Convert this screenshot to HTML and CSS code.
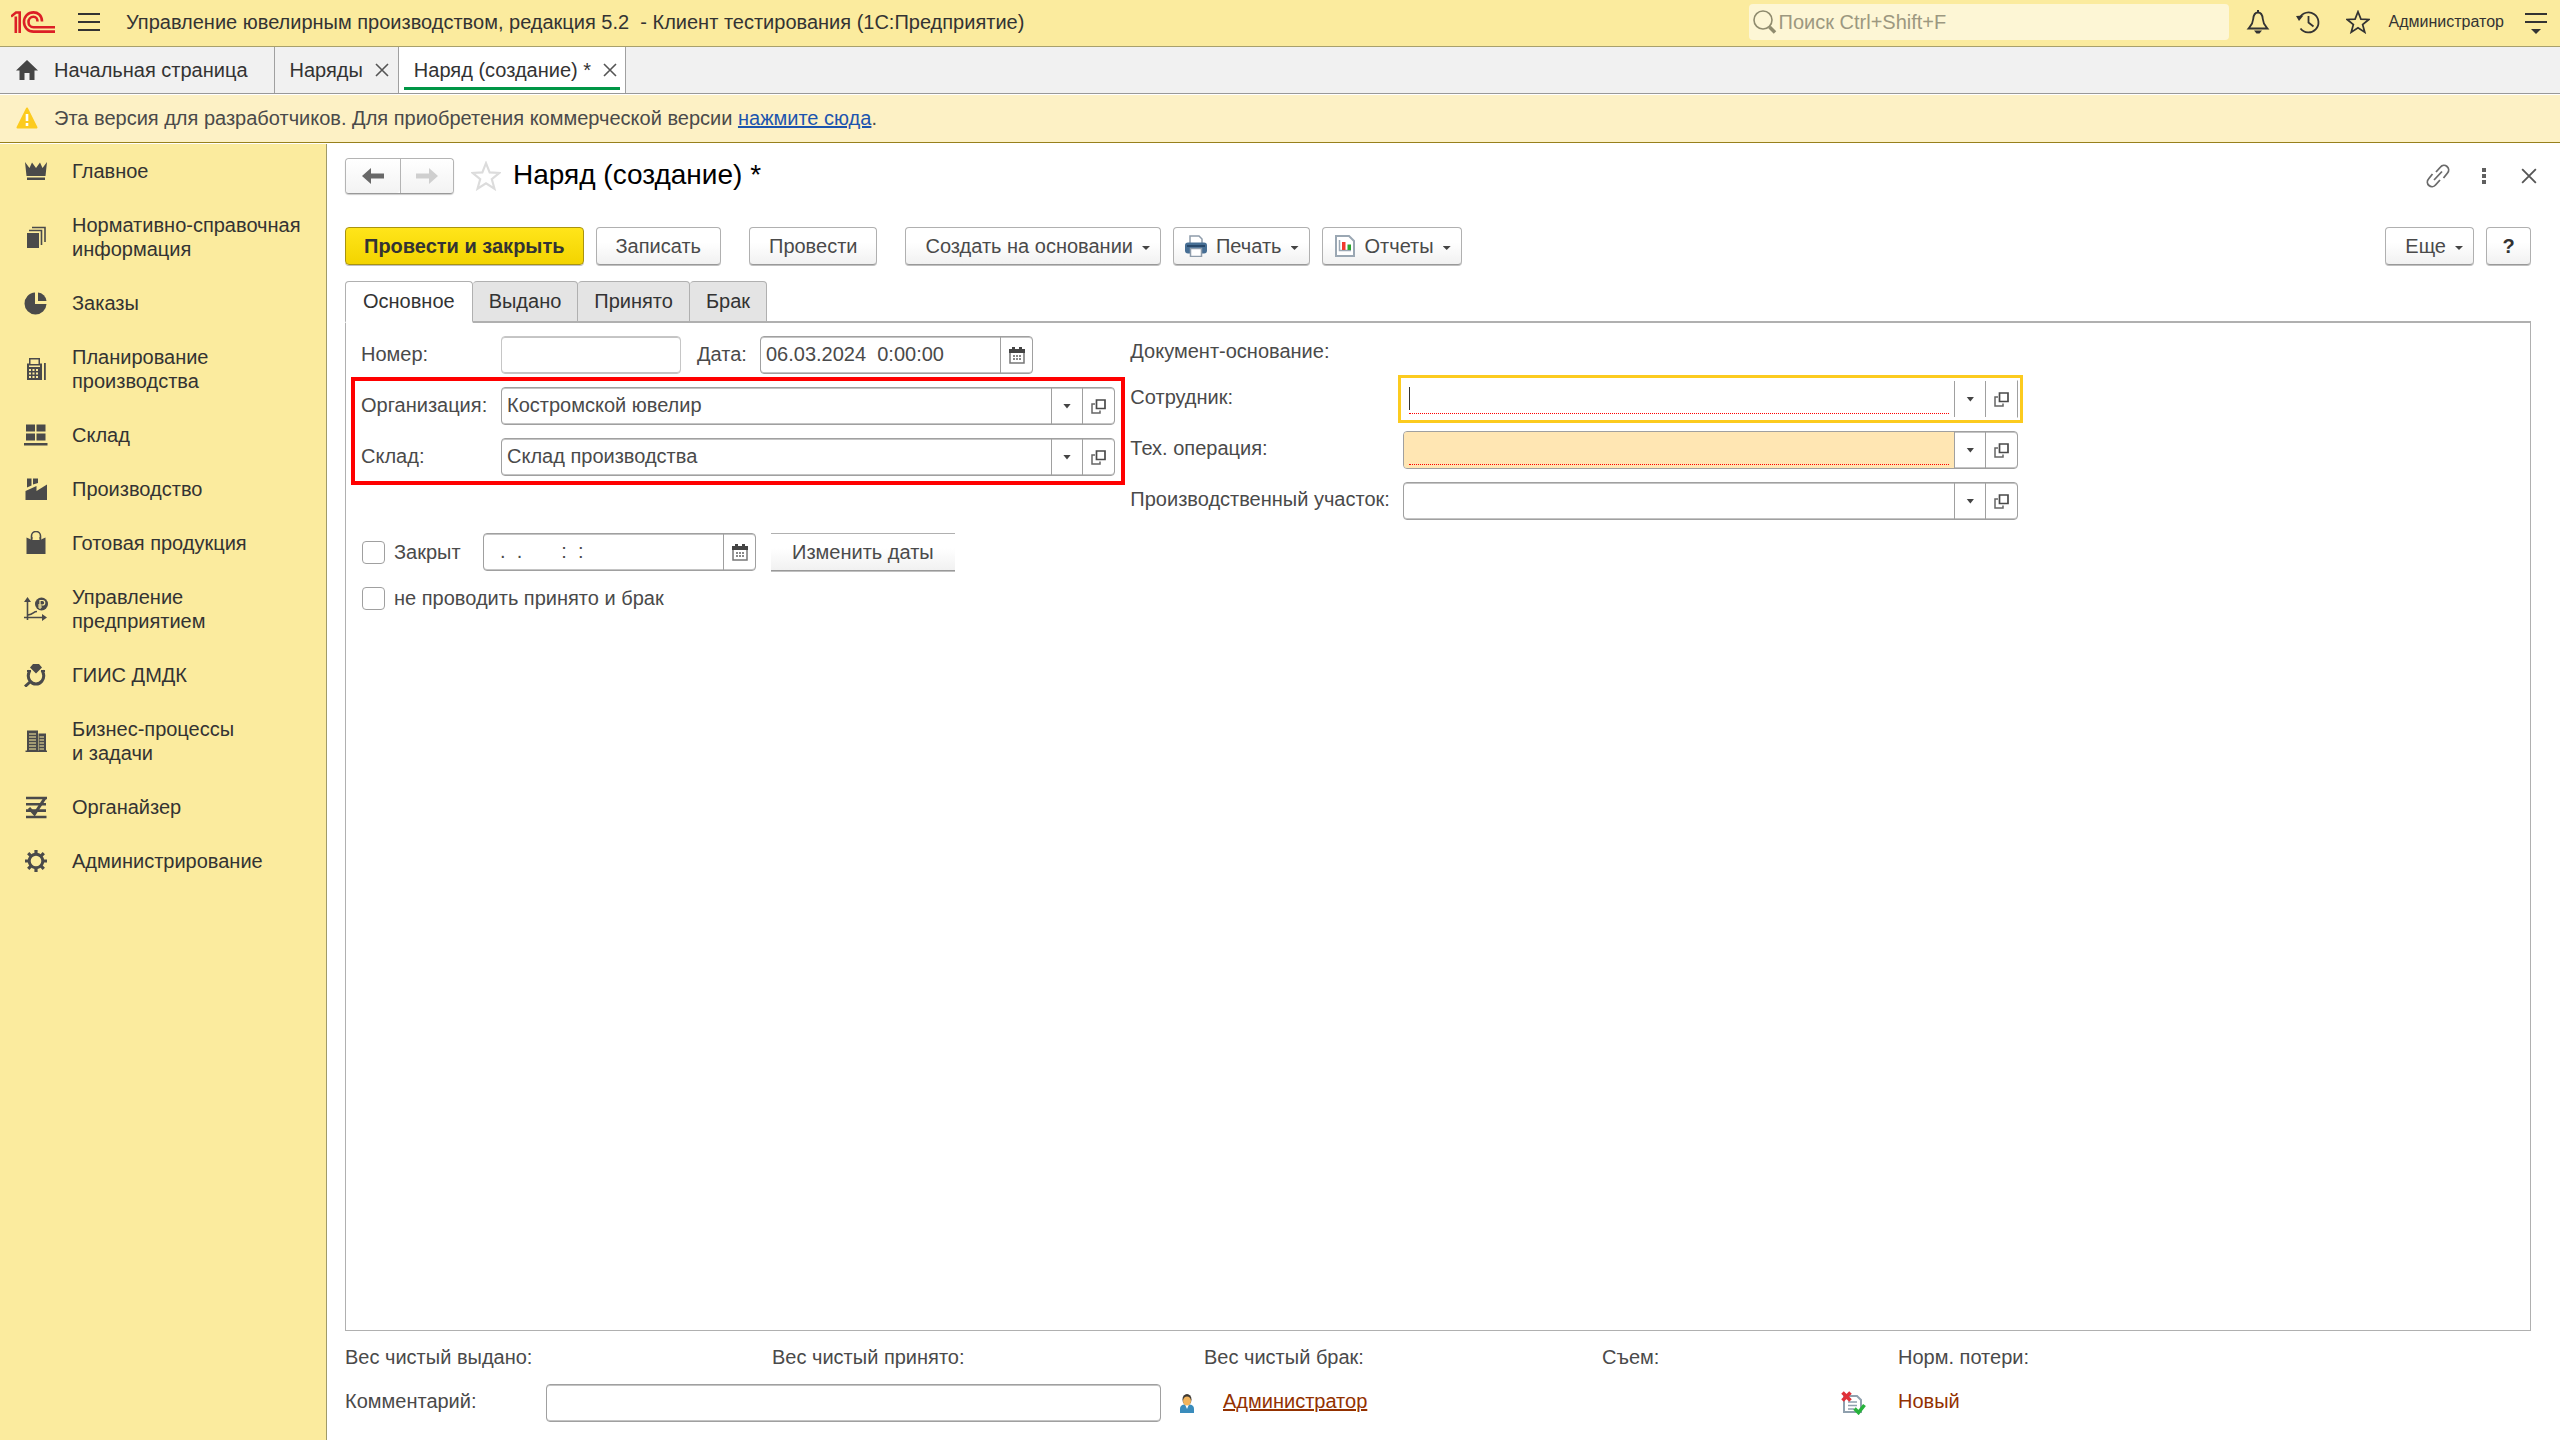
FILE: index.html
```html
<!DOCTYPE html>
<html lang="ru">
<head>
<meta charset="utf-8">
<title>Наряд (создание) *</title>
<link rel="stylesheet" href="styles.css">
</head>
<body>
<svg class="defs" aria-hidden="true">
  <symbol id="open" viewBox="0 0 15 15"><path d="M5.500 1h8.500v8.500H5.500z" fill="none" stroke="#4a4a4a" stroke-width="1.700"/><path d="M4 5H1v9h8v-2.500" fill="none" stroke="#666" stroke-width="1.500"/></symbol>
  <symbol id="calendar" viewBox="0 0 16 17"><path d="M1 3h14v13H1z" fill="#fff" stroke="#777" stroke-width="1.500"/><path d="M0 2h16v4H0zM3 0h3v3H3zM10 0h3v3h-3z" fill="#444"/><path d="M4 8h2v2H4zM7 8h2v2H7zM10 8h2v2h-2zM4 11h2v2H4zM7 11h2v2H7zM10 11h2v2h-2z" fill="#888"/></symbol>
  <symbol id="cross" viewBox="0 0 14 14"><path d="M1 1l12 12M13 1L1 13" fill="none" stroke="currentColor" stroke-width="1.6"/></symbol>
  <symbol id="star" viewBox="0 0 28 28"><path d="M14 2l3.400 8.600 9.200.5-7.200 5.800 2.500 9L14 20.800l-7.900 5.100 2.500-9L1.400 11.100l9.200-.5z" fill="none" stroke="currentColor" stroke-width="2"/></symbol>
</svg>

<header class="topbar">
  <svg class="logo" viewBox="0 0 44 22" aria-label="1C"><g fill="none" stroke="#dc1f26" stroke-width="2.600"><path d="M0 5.600L5 1.500h3.700V22M4.800 5.500V22"/><path d="M31 10.500C31 4 26.500 1.400 22.500 1.400C17 1.400 13 5.700 13 11s4 9.600 9.500 9.600H44"/><path d="M26.500 10.500c0-3-1.600-4.700-4-4.700c-3 0-5 2.300-5 5.200s2 5.200 5 5.200H44"/></g></svg>
  <button class="icon-btn menu" aria-label="Меню"><svg viewBox="0 0 22 18"><path d="M0 1h22M0 9h22M0 17h22" stroke="#333" stroke-width="2"/></svg></button>
  <span class="app-title">Управление ювелирным производством, редакция 5.2&nbsp; - Клиент тестирования (1С:Предприятие)</span>
  <label class="search">
    <svg viewBox="0 0 24 24"><circle cx="10" cy="10" r="9" fill="none" stroke="#8f8b6e" stroke-width="1.600"/><path d="M16.500 17l5.500 5.500" stroke="#8f8b6e" stroke-width="3.500"/></svg>
    <input type="text" placeholder="Поиск Ctrl+Shift+F" aria-label="Поиск">
  </label>
  <div class="top-icons">
    <button class="icon-btn" aria-label="Оповещения"><svg viewBox="0 0 24 24"><path d="M12 2.500c-3.500 0-4.500 3-4.800 6.500C6.900 14 5 15.500 2.500 18.500h19C19 15.500 17.100 14 16.800 9c-.3-3.500-1.300-6.500-4.800-6.500z" fill="none" stroke="#333" stroke-width="1.800"/><path d="M12 0v3" stroke="#333" stroke-width="2"/><path d="M8 20.500h8l-2.500 3h-3z" fill="#333"/></svg></button>
    <button class="icon-btn" aria-label="История"><svg viewBox="0 0 24 24"><path d="M3.500 8A10 10 0 1 1 4.500 18.500" fill="none" stroke="#333" stroke-width="1.800"/><path d="M0 6l7.500-.500L3 11z" fill="#333"/><path d="M12.500 6v6.500l5 4" fill="none" stroke="#333" stroke-width="1.800"/></svg></button>
    <button class="icon-btn" aria-label="Избранное"><svg><use href="#star"/></svg></button>
  </div>
  <span class="user">Администратор</span>
  <button class="icon-btn" aria-label="Настройки"><svg viewBox="0 0 24 24"><path d="M1 4h22M1 12h22" stroke="#333" stroke-width="2"/><path d="M7 19h10l-5 5z" fill="#333"/></svg></button>
</header>

<nav class="tabs">
  <a class="tab home" href="#"><svg class="home-icon" viewBox="0 0 22 20"><path d="M11 0l11 10.500h-3.500V20h-5v-7h-5v7h-5v-9.500H0z" fill="#454545"/></svg>Начальная страница</a>
  <div class="tab"><a href="#">Наряды</a><button class="close" aria-label="Закрыть"><svg><use href="#cross"/></svg></button></div>
  <div class="tab active"><a href="#">Наряд (создание) *</a><button class="close" aria-label="Закрыть"><svg><use href="#cross"/></svg></button></div>
</nav>

<div class="banner">
  <svg viewBox="0 0 22 22"><path d="M11 1.500L20.500 20.500h-19z" fill="#fccb1f" stroke="#fccb1f" stroke-width="2" stroke-linejoin="round"/><path d="M11 7v7M11 16v3" stroke="#fff" stroke-width="2.600"/></svg>
  <span>Эта версия для разработчиков. Для приобретения коммерческой версии <a href="#">нажмите сюда</a>.</span>
</div>

<div class="body">
  <aside class="sidebar">
    <a href="#"><svg viewBox="0 0 24 24"><path d="M1 3l4.500 6L8 3.500 12 9l4-5.500L18.500 9 23 3l-1.500 14h-19zM3 18.500h18V21H3z"/></svg><span>Главное</span></a>
    <a href="#"><svg viewBox="0 0 24 24"><path d="M3 8h12v15H3z"/><path d="M5 5.500h12.500V20M8 2.500h13V17" fill="none" stroke="#4a4a4a" stroke-width="1.600"/></svg><span>Нормативно-справочная информация</span></a>
    <a href="#"><svg viewBox="0 0 24 24"><path d="M11 1.500v11.500h11.500A11 11 0 1 1 11 1.500z"/><path d="M14 1.500a9.500 9.500 0 0 1 8.500 8.500H14z"/></svg><span>Заказы</span></a>
    <a href="#"><svg viewBox="0 0 24 24"><path d="M3 6.500h2V1h11v5.500h2V23H3z"/><path d="M20 6v17h1.800V6z"/><path d="M6.500 2.500h8v4.500h-8zM5 8.500h11V10H5zM5 12h2v2H5zM8.500 12h2v2h-2zM12 12h2v2h-2zM5 15.500h2v2H5zM8.500 15.500h2v2h-2zM12 15.500h2v2h-2zM5 19h2v2H5zM8.500 19h2v2h-2zM12 19h2v2h-2z" fill="#fbeb9e"/></svg><span>Планирование производства</span></a>
    <a href="#"><svg viewBox="0 0 24 24"><path d="M2 1.500h9v7H2zM12.500 1.500h9v7h-9zM2 10.500h9v7H2zM12.500 10.500h9v7h-9zM0 20h23.500v2.500H0z"/></svg><span>Склад</span></a>
    <a href="#"><svg viewBox="0 0 24 24"><path d="M1.500 23V14l11-5v5L23 7.500V23zM3 1.500h4.500v7L3 10.500zM9 1.500h5v4.500L9 7.500z"/></svg><span>Производство</span></a>
    <a href="#"><svg viewBox="0 0 24 24"><path d="M2.500 6.500L7 8.500V6h1.500v3h7V6H17v2.500l4.500-2V23h-19z"/><path d="M7.500 8V5a4.500 4.500 0 0 1 9 0v3" fill="none" stroke="#4a4a4a" stroke-width="1.600"/></svg><span>Готовая продукция</span></a>
    <a href="#"><svg viewBox="0 0 24 24"><path d="M3.500 3v20M0 20.500h21M4 18c6-1 5-3.500 9-3.500" fill="none" stroke="#4a4a4a" stroke-width="1.600"/><path d="M3.500 0l3.500 5H0zM23 20.500l-5 3.500v-7z"/><circle cx="17.500" cy="7" r="6.500"/><path d="M16 12V3.500h2.500a2 2 0 0 1 0 4.500H14M14 10h4" fill="none" stroke="#fbeb9e" stroke-width="1.200"/></svg><span>Управление предприятием</span></a>
    <a href="#"><svg viewBox="0 0 24 24"><path d="M9 1h6l3 3.500-6 6-6-6zM3 7h4v2H3zM17 7h4v2h-4z"/><path d="M6 7.500C3 12 4 15 6 18c3 4 9 4 12 0 2-3 3-6 0-10.500M6.500 18.500L1 23.500" fill="none" stroke="#4a4a4a" stroke-width="3"/></svg><span>ГИИС ДМДК</span></a>
    <a href="#"><svg viewBox="0 0 24 24"><path d="M3 1.500h11V22H3zM14.500 4.500H22V22h-7.500zM1.500 21.500h21.500V23H1.500z"/><path d="M5 5h7M5 8h7M5 11h7M5 14h7M5 17h7M5 20h7M15.500 8H20M15.500 11H20M15.500 14H20M15.500 17H20M15.500 20H20" stroke="#fbeb9e" stroke-width="1.200"/></svg><span>Бизнес-процессы и&nbsp;задачи</span></a>
    <a href="#"><svg viewBox="0 0 24 24"><path d="M2 3h21M2 9.300h20M2 15.600h20M2 22h20.500" stroke="#4a4a4a" stroke-width="2.600"/><path d="M5 13l5.500 6L21 3" fill="none" stroke="#4a4a4a" stroke-width="3"/></svg><span>Органайзер</span></a>
    <a href="#"><svg viewBox="0 0 24 24"><circle cx="12" cy="12" r="6.800" fill="none" stroke="#4a4a4a" stroke-width="3"/><path d="M12 1v4M12 19v4M1 12h4M19 12h4M4.200 4.200l2.900 2.900M16.900 16.900l2.900 2.900M19.800 4.200l-2.900 2.900M7.100 16.900l-2.900 2.900" stroke="#4a4a4a" stroke-width="3.200"/></svg><span>Администрирование</span></a>
  </aside>

  <main class="page">
    <div class="title-row">
      <div class="nav-buttons">
        <button aria-label="Назад"><svg viewBox="0 0 22 16"><path d="M0 8l9-8v5.500h13v5H9V16z" fill="#686868"/></svg></button>
        <button aria-label="Вперед" disabled><svg viewBox="0 0 22 16"><path d="M22 8l-9-8v5.500H0v5h13V16z" fill="#cfcfcf"/></svg></button>
      </div>
      <button class="fav" aria-label="В избранное"><svg><use href="#star"/></svg></button>
      <h1>Наряд (создание) *</h1>
      <div class="title-tools">
        <button class="icon-btn" aria-label="Ссылка"><svg viewBox="0 0 24 24"><g fill="none" stroke="#6a6a6a" stroke-width="1.800"><path d="M10 8l4.500-5A4.500 4.500 0 0 1 21.500 9l-4 5M14 16l-4.500 5A4.500 4.500 0 0 1 2.500 15l4-5M8 16l8-8.500"/></g></svg></button>
        <button class="icon-btn" aria-label="Еще"><svg viewBox="0 0 24 24"><path d="M10 4h4v4h-4zM10 10h4v4h-4zM10 16h4v4h-4z" fill="#5f5f5f"/></svg></button>
        <button class="close" aria-label="Закрыть"><svg><use href="#cross"/></svg></button>
      </div>
    </div>

    <div class="toolbar">
      <div class="group"><button class="btn primary">Провести и закрыть</button><button class="btn">Записать</button></div>
      <button class="btn">Провести</button>
      <div class="group">
        <button class="btn drop">Создать на основании<i class="caret"></i></button>
        <button class="btn drop with-icon"><svg viewBox="0 0 22 22"><path d="M5 9V1h9l3 3v5z" fill="#fff" stroke="#8e9cab" stroke-width="1.500"/><rect y="7.500" width="22" height="11" rx="3" fill="#466e94"/><path d="M2 11h18" stroke="#27486a" stroke-width="2"/><path d="M5.500 13.500h11v8h-11z" fill="#fff" stroke="#8e9cab" stroke-width="1.500"/></svg>Печать<i class="caret"></i></button>
        <button class="btn drop with-icon"><svg viewBox="0 0 22 22"><path d="M2 1h13l5 5v15H2z" fill="#fff" stroke="#9aa7b3" stroke-width="2"/><path d="M5.500 5v10.500H17" fill="none" stroke="#9aa7b3" stroke-width="1.500"/><path d="M8 7h3.500v8H8z" fill="#f03a2e"/><path d="M13.500 9.500H17V15h-3.500z" fill="#2ba52f"/></svg>Отчеты<i class="caret"></i></button>
      </div>
      <div class="group right"><button class="btn drop">Еще<i class="caret"></i></button><button class="btn help">?</button></div>
    </div>

    <div class="form-tabs" role="tablist">
      <button role="tab" aria-selected="true">Основное</button><button role="tab">Выдано</button><button role="tab">Принято</button><button role="tab">Брак</button>
    </div>

    <section class="panel">
      <div class="col-left">
        <div class="row number-row">
          <label class="lbl" for="num">Номер:</label>
          <div class="field pale short"><input id="num" type="text"></div>
          <label class="date-lbl" for="date">Дата:</label>
          <div class="field date"><input id="date" type="text" value="06.03.2024  0:00:00"><button aria-label="Календарь"><svg class="cal"><use href="#calendar"/></svg></button></div>
        </div>
        <div class="marked">
          <div class="row">
            <label class="lbl" for="org">Организация:</label>
            <div class="field"><input id="org" type="text" value="Костромской ювелир"><button aria-label="Выбрать"><i class="caret"></i></button><button aria-label="Открыть"><svg><use href="#open"/></svg></button></div>
          </div>
          <div class="row">
            <label class="lbl" for="store">Склад:</label>
            <div class="field"><input id="store" type="text" value="Склад производства"><button aria-label="Выбрать"><i class="caret"></i></button><button aria-label="Открыть"><svg><use href="#open"/></svg></button></div>
          </div>
        </div>
        <div class="row closed-row">
          <label class="check"><input type="checkbox">Закрыт</label>
          <div class="field date"><input type="text" aria-label="Дата закрытия" value="  .  .       :  :"><button aria-label="Календарь"><svg class="cal"><use href="#calendar"/></svg></button></div>
          <button class="btn flat">Изменить даты</button>
        </div>
        <label class="check second"><input type="checkbox">не проводить принято и брак</label>
      </div>

      <div class="col-right">
        <div class="row base-row"><span>Документ-основание:</span></div>
        <div class="row">
          <label for="emp">Сотрудник:</label>
          <div class="field focused"><span class="required"><input id="emp" type="text"></span><button aria-label="Выбрать"><i class="caret"></i></button><button aria-label="Открыть"><svg><use href="#open"/></svg></button></div>
        </div>
        <div class="row">
          <label for="op">Тех. операция:</label>
          <div class="field"><span class="required warn"><input id="op" type="text"></span><button aria-label="Выбрать"><i class="caret"></i></button><button aria-label="Открыть"><svg><use href="#open"/></svg></button></div>
        </div>
        <div class="row">
          <label for="area">Производственный участок:</label>
          <div class="field"><input id="area" type="text"><button aria-label="Выбрать"><i class="caret"></i></button><button aria-label="Открыть"><svg><use href="#open"/></svg></button></div>
        </div>
      </div>
    </section>

    <footer class="footer">
      <div class="totals"><span>Вес чистый выдано:</span><span>Вес чистый принято:</span><span>Вес чистый брак:</span><span>Съем:</span><span>Норм. потери:</span></div>
      <div class="comment-row">
        <label for="comment">Комментарий:</label>
        <div class="field"><input id="comment" type="text"></div>
        <svg class="person" viewBox="0 0 14 19"><path d="M0 19v-4q0-4 4-4.500h6q4 .5 4 4.500v4z" fill="#3a8cbc"/><path d="M5 10.500h4L7 15z" fill="#fff"/><ellipse cx="7" cy="5.500" rx="4.500" ry="5.500" fill="#3d3833"/><ellipse cx="7" cy="7" rx="4" ry="4.500" fill="#f2b45c"/></svg>
        <a class="brown" href="#">Администратор</a>
        <svg class="state" viewBox="0 0 25 24"><path d="M3 5h13l4 4v12H3z" fill="#fff" stroke="#8fa0ae" stroke-width="2"/><path d="M7 11h9M7 14.500h9M7 18h6" stroke="#8fa0ae" stroke-width="1.500"/><path d="M1.500 1.500l8 8M9.500 1.500l-8 8" stroke="#e03038" stroke-width="3.600"/><path d="M13.500 17.500l4 4L23.500 14" fill="none" stroke="#27b23c" stroke-width="3.600"/></svg>
        <span class="brown">Новый</span>
      </div>
    </footer>
  </main>
</div>
</body>
</html>
```
FILE: styles.css
```css
* { box-sizing: border-box; }

body {
  margin: 0;
  min-height: 100vh;
  display: flex;
  flex-direction: column;
  background: #fff;
  color: #4a4a4a;
  font: 20px/24px "Liberation Sans", Arial, sans-serif;
}

button, input { font: inherit; color: inherit; }
button { padding: 0; border: 0; background: none; }
a { color: inherit; text-decoration: none; }
svg { display: block; flex: none; }
.defs { position: absolute; width: 0; height: 0; }

/* Application bar */
.topbar {
  display: flex;
  align-items: center;
  height: 47px;
  padding: 0 12px 2px 11px;
  background: #fbeb9e;
  border-bottom: 1px solid #a8a06c;
  color: #333;
}
.logo { width: 44px; height: 22px; }
.icon-btn svg { width: 24px; height: 24px; }
.menu { margin: 0 26px 0 23px; }
.menu svg { width: 22px; height: 18px; }
.search {
  display: flex;
  align-items: center;
  gap: 2px;
  width: 480px;
  height: 36px;
  margin-left: auto;
  padding-left: 4px;
  border-radius: 4px;
  background: #fdf6d5;
}
.search svg { width: 24px; height: 24px; }
.search input { flex: 1; min-width: 0; padding: 0; border: 0; outline: 0; background: none; }
.search input::placeholder { color: #9c9880; opacity: 1; }
.top-icons { display: flex; gap: 26px; margin: 0 19px 0 17px; }
.user { margin-right: 20px; font-size: 16px; }

/* Open windows */
.tabs {
  display: flex;
  height: 47px;
  background: #f1f1f1;
  border-bottom: 1px solid #999;
  color: #333;
}
.tab { display: flex; align-items: center; gap: 12px; padding: 0 9px 0 15px; border-right: 1px solid #a0a0a0; }
.tab.home { gap: 16px; padding: 0 26px 0 16px; }
.home-icon { width: 22px; height: 20px; }
.tab.active { padding-right: 8px; background: linear-gradient(#009646, #009646) center bottom 3px / calc(100% - 10px) 3px no-repeat #fff; }
.close { color: #555; }
.close svg { width: 14px; height: 14px; }

.banner {
  display: flex;
  align-items: center;
  gap: 16px;
  height: 48px;
  margin-top: 1px;
  padding: 0 0 2px 16px;
  background: #fdf1c5;
  border-bottom: 1px solid #97801c;
}
.banner svg { width: 22px; height: 22px; }
.banner a { color: #1c55ae; text-decoration: underline; }

.body { flex: 1; display: flex; margin-top: 1px; }

/* Sections */
.sidebar { flex: none; width: 327px; background: #fbeb9e; border-right: 1px solid #a09a68; color: #333; }
.sidebar a { display: flex; align-items: center; gap: 24px; padding: 15px 20px 15px 24px; }
.sidebar svg { width: 24px; height: 24px; fill: #4a4a4a; }

/* Document */
.page { flex: 1; min-width: 0; display: flex; flex-direction: column; padding: 14px 29px 18px 18px; }
.title-row { display: flex; align-items: center; height: 36px; }
.nav-buttons { display: flex; border: 1px solid #b4b4b4; border-bottom-color: #999; border-radius: 4px; box-shadow: 0 1px 1px #ccc; }
.nav-buttons button { display: grid; place-items: center; width: 54px; height: 34px; background: linear-gradient(#fff, #f3f3f3); border-radius: 4px; }
.nav-buttons button + button { width: 53px; border-left: 1px solid #b4b4b4; border-radius: 0 4px 4px 0; }
.nav-buttons svg { width: 22px; height: 16px; }
.fav { margin: 0 12px 0 17px; color: #dcdcdc; }
.fav svg { width: 30px; height: 30px; }
h1 { margin: 0; padding-bottom: 2px; font-size: 28px; line-height: 34px; font-weight: 400; color: #000; }
.title-tools { display: flex; align-items: center; gap: 22px; margin: 0 -6px 0 auto; }
.title-tools .close { margin-left: 3px; }
.title-tools .close svg { width: 16px; height: 16px; }

.toolbar { display: flex; gap: 28px; margin-top: 33px; }
.group { display: flex; gap: 12px; }
.group.right { margin-left: auto; }
.btn {
  display: flex;
  align-items: center;
  height: 38px;
  padding: 0 19px;
  border: 1px solid #b0b0b0;
  border-bottom-color: #999;
  border-radius: 4px;
  background: linear-gradient(#fff 40%, #f1f1f1);
  box-shadow: 0 1px #c0c0c0;
  white-space: nowrap;
}
.btn.primary { padding: 0 18px; background: linear-gradient(#ffe51a, #f3d400); border-color: #a99310; font-weight: 700; color: #333; }
.btn.drop { gap: 9px; padding: 0 10px 0 19px; }
.btn.with-icon { padding-left: 11px; }
.btn.with-icon svg { width: 22px; height: 22px; }
.btn.help { width: 45px; padding: 0; justify-content: center; font-weight: 700; color: #333; }
.caret { width: 8px; height: 4px; background: #444; clip-path: polygon(0 0, 100% 0, 50% 100%); }
.btn .caret { margin-top: 4px; }

.form-tabs { display: flex; margin-top: 16px; position: relative; z-index: 1; margin-bottom: -2px; }
.form-tabs button {
  height: 42px;
  padding: 0 16px 1px;
  border: 1px solid #b0b0b0;
  border-left: 0;
  border-bottom: 2px solid #b0b0b0;
  border-radius: 4px 4px 0 0;
  background: #e4e4e4;
  color: #333;
}
.form-tabs [aria-selected="true"] { padding: 0 17px 1px; border-left: 1px solid #b0b0b0; border-bottom-color: #fff; background: #fff; }

.panel {
  flex: 1;
  display: grid;
  grid-template-columns: 784fr 1399fr;
  padding-top: 13px;
  border: 1px solid #b0b0b0;
  border-top-width: 2px;
}
.row { display: flex; align-items: center; }
.col-left { padding-left: 5px; }
.number-row { padding-left: 10px; }
.row label, .row span { padding-bottom: 2px; }
.lbl { width: 140px; }
.date-lbl { width: 63px; margin-left: 16px; }

.field {
  flex: 1;
  display: flex;
  height: 38px;
  border: 1px solid #a0a0a0;
  border-radius: 4px;
  box-shadow: inset 0 1px #c4c4c4, inset 0 -1px #c4c4c4;
}
.field input { flex: 1; min-width: 0; width: 100%; padding: 0 0 2px 5px; border: 0; outline: 0; background: none; }
.field button { display: grid; place-items: center; width: 31px; border-left: 1px solid #a0a0a0; }
.field button:last-child { width: 32px; }
.field svg { width: 15px; height: 15px; }
.field .cal { width: 16px; height: 17px; }
.field .caret { width: 8px; height: 5px; }
.field.pale { border-color: #c6c6c6; }
.field.short { flex: none; width: 180px; }
.field.date { flex: none; width: 273px; }

.marked {
  display: grid;
  gap: 13px;
  width: 774px;
  margin-top: 3px;
  padding: 6px 6px 5px;
  border: 4px solid #f00;
}
.closed-row { margin-top: 48px; padding-left: 11px; }
.closed-row .check { width: 121px; padding: 0; }
.check { display: flex; align-items: center; gap: 9px; }
.check input { appearance: none; width: 23px; height: 23px; margin: 0; border: 1px solid #a0a0a0; border-radius: 4px; background: #fff; }
.check.second { margin-top: 15px; padding-left: 11px; }
.btn.flat { margin-left: 15px; padding: 0 21px; border-left: 0; border-right: 0; border-radius: 0; }

.col-right { display: grid; gap: 13px; align-content: start; }
.col-right .row { max-width: 888px; }
.col-right label { width: 273px; padding-bottom: 4px; }
.base-row { height: 31px; }
.row .required { position: relative; flex: 1; display: flex; padding: 0; border-radius: 3px 0 0 3px; }
.required::after { content: ""; position: absolute; left: 5px; right: 5px; bottom: 3px; border-bottom: 1px dotted #f00; }
.required.warn { background: #ffe6b3; }
.field.focused { border-color: #fff #a0a0a0 #fff #fff; border-radius: 0; box-shadow: none; outline: 3px solid #fccb1f; outline-offset: 2px; }
.focused .required::before { content: ""; position: absolute; left: 5px; top: 6px; width: 1px; height: 23px; background: #333; }

.totals, .comment-row { display: grid; align-items: center; }
.totals { grid-template-columns: 427fr 432fr 398fr 296fr 633fr; margin: 14px 0 15px; }
.comment-row { grid-template-columns: 201fr 615fr 62fr 618fr 57fr 633fr; }
.comment-row label, .brown { padding-bottom: 4px; }
.person { width: 14px; height: 19px; margin-left: 19px; }
.state { width: 25px; height: 24px; }
.brown { color: #933100; }
a.brown { text-decoration: underline; }
```
